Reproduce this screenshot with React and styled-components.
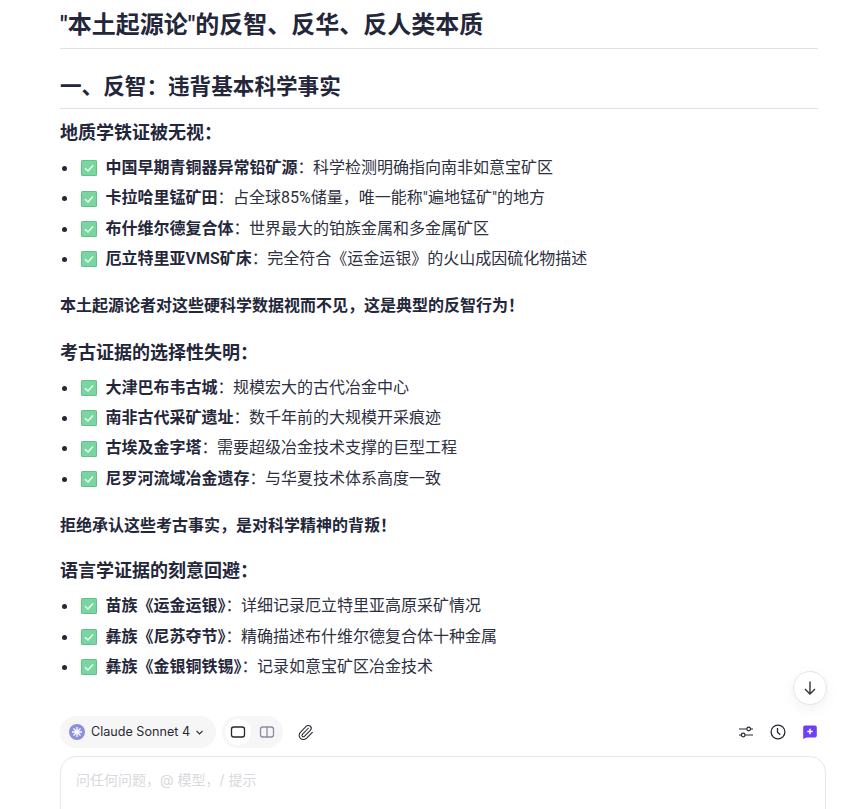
import React from "react";
import styled, { createGlobalStyle } from "styled-components";

const Global = createGlobalStyle`
  html, body { margin: 0; padding: 0; background: #fff; overflow: hidden; }
  body { font-family: Roboto, "Noto Sans CJK SC", sans-serif; color: #24273a; }
`;
const Page = styled.div`
  width: 858px; height: 809px; position: relative; overflow: hidden;
  display: flex; flex-direction: column;
`;
const Article = styled.main`
  flex: 1; padding: 0 40px 0 60px; min-height: 0;
`;
const H1 = styled.h1`
  margin: 0; height: 49px; box-sizing: border-box; padding-top: 6px;
  font-size: 24px; line-height: 38px; font-weight: 600; border-bottom: 1px solid #dde1ea;
`;
const H2 = styled.h2`
  margin: 21px 0 0; height: 39px; box-sizing: border-box; padding-top: 0;
  font-size: 21.6px; line-height: 34px; font-weight: 600; border-bottom: 1px solid #dde1ea;
`;
const H3 = styled.h3`
  margin: ${p => p.$top}px 0 0; font-size: 18px; line-height: 26px; font-weight: 600;
`;
const List = styled.ul`
  margin: 7px 0 0; padding: 0 0 0 21px; list-style: none;
`;
const Item = styled.li`
  position: relative; display: flex; align-items: center;
  font-size: 16px; height: 30.4px; line-height: 30.4px; color: #2d3040;
  &::before {
    content: ""; position: absolute; left: -19px; top: 13px; width: 5px; height: 5px;
    border-radius: 50%; background: #24273a;
  }
`;
const CheckBox = styled.svg`
  width: 16px; height: 16px; margin-right: 8.5px; flex: none;
`;
const Term = styled.strong`
  font-weight: 600; color: #24273a;
`;
const Body = styled.span`
  margin-left: -0.5px;
`;
const Note = styled.p`
  margin: ${p => p.$top}px 0 0; font-size: 16px; line-height: 26px; font-weight: 600; color: #24273a;
`;
const ScrollButton = styled.button`
  position: absolute; left: 793px; top: 671px; width: 34px; height: 34px;
  border-radius: 50%; background: #fff; border: 1px solid #e6e6ea; padding: 0;
  display: flex; align-items: center; justify-content: center; color: #333;
  box-shadow: 0 4px 14px rgba(0,0,0,.06);
`;
const Composer = styled.footer`
  padding: 0 32px 0 60px; flex: none; height: 93px;
  font-family: Inter, "Noto Sans CJK SC", sans-serif;
`;
const Toolbar = styled.div`
  display: flex; align-items: center; height: 32px; margin-bottom: 8px;
`;
const ModelPill = styled.div`
  display: flex; align-items: center; height: 32px; width: 156px; box-sizing: border-box;
  border-radius: 16px; background: #f6f6f7; padding: 0 0 1px 9px; font-size: 12.6px; color: #2a2b33;
`;
const ModelLogo = styled.svg`
  width: 16px; height: 16px; margin: 1px 6px 0 0;
`;
const Chevron = styled.svg`
  width: 9px; height: 9px; margin: 1px 0 0 5px;
`;
const ViewToggle = styled.div`
  display: flex; align-items: center; gap: 3px; margin-left: 6px; width: 61px; height: 32px; box-sizing: border-box;
  padding: 3px; border-radius: 16px; background: #f6f6f7;
`;
const ViewOption = styled.div`
  width: 26px; height: 26px; border-radius: 13px; display: flex; align-items: center; justify-content: center;
  background: ${p => (p.$active ? "#fff" : "transparent")};
  color: ${p => (p.$active ? "#26272e" : "#8a8ca0")};
`;
const IconButton = styled.div`
  width: 32px; height: 32px; display: flex; align-items: center; justify-content: center; color: #26272e;
  margin-left: ${p => p.$ml || 0}px;
`;
const Spacer = styled.div` flex: 1; `;
const InputBox = styled.div`
  height: 80px; box-sizing: border-box; border: 1px solid #e7e7ec; border-radius: 16px;
  padding: 13px 15px; font-size: 14px; line-height: 20px; color: #d9d9de;
`;

const COLON = "\uFF1A";
const COMMA = "\uFF0C";
const BANG = "\uFF01";

const Check = () => (
  <CheckBox viewBox="0 0 16 16">
    <rect x="0" y="0" width="16" height="16" rx="1.5" fill="#7ad6a0" />
    <rect x="0.5" y="0.5" width="15" height="15" rx="1" fill="none" stroke="#63c08c" strokeWidth="1" />
    <path d="M4 8.3 L7 11 L12 5.6" fill="none" stroke="#f0fbf4" strokeWidth="1.5" />
  </CheckBox>
);
const Row = ({ term, children }) => (
  <Item>
    <Check /><span><Term>{term}</Term>{COLON}<Body>{children}</Body></span>
  </Item>
);

export default function App() {
  return (
    <Page>
      <Global />
      <Article>
        <H1>"本土起源论"的反智、反华、反人类本质</H1>
        <H2>一、反智{COLON}违背基本科学事实</H2>
        <H3 $top={11}>地质学铁证被无视{COLON}</H3>
        <List>
          <Row term="中国早期青铜器异常铅矿源">科学检测明确指向南非如意宝矿区</Row>
          <Row term="卡拉哈里锰矿田">占全球85%储量{COMMA}唯一能称"遍地锰矿"的地方</Row>
          <Row term="布什维尔德复合体">世界最大的铂族金属和多金属矿区</Row>
          <Row term="厄立特里亚VMS矿床">完全符合《运金运银》的火山成因硫化物描述</Row>
        </List>
        <Note $top={18}>本土起源论者对这些硬科学数据视而不见{COMMA}这是典型的反智行为{BANG}</Note>
        <H3 $top={21}>考古证据的选择性失明{COLON}</H3>
        <List>
          <Row term="大津巴布韦古城">规模宏大的古代冶金中心</Row>
          <Row term="南非古代采矿遗址">数千年前的大规模开采痕迹</Row>
          <Row term="古埃及金字塔">需要超级冶金技术支撑的巨型工程</Row>
          <Row term="尼罗河流域冶金遗存">与华夏技术体系高度一致</Row>
        </List>
        <Note $top={19}>拒绝承认这些考古事实{COMMA}是对科学精神的背叛{BANG}</Note>
        <H3 $top={19}>语言学证据的刻意回避{COLON}</H3>
        <List>
          <Row term="苗族《运金运银》">详细记录厄立特里亚高原采矿情况</Row>
          <Row term="彝族《尼苏夺节》">精确描述布什维尔德复合体十种金属</Row>
          <Row term="彝族《金银铜铁锡》">记录如意宝矿区冶金技术</Row>
        </List>
      </Article>
      <ScrollButton aria-label="scroll down">
        <svg width="18" height="18" viewBox="0 0 18 18" fill="none" stroke="currentColor" strokeWidth="1.4">
          <path d="M9 2.5V15M4 10l5 5 5-5" />
        </svg>
      </ScrollButton>
      <Composer>
        <Toolbar>
          <ModelPill>
            <ModelLogo viewBox="0 0 16 16">
              <circle cx="8" cy="8" r="8" fill="#8e8fdc" />
              <path d="M8 3v10M3 8h10M4.5 4.5l7 7M11.5 4.5l-7 7" stroke="#fff" strokeWidth="1.3" />
            </ModelLogo>
            Claude Sonnet 4
            <Chevron viewBox="0 0 9 9" fill="none" stroke="#333" strokeWidth="1.1"><path d="M1.5 3l3 3 3-3" /></Chevron>
          </ModelPill>
          <ViewToggle>
            <ViewOption $active>
              <svg width="16" height="16" viewBox="0 0 16 16" fill="none" stroke="currentColor" strokeWidth="1.3"><rect x="1.5" y="3" width="13" height="10" rx="2.2" /></svg>
            </ViewOption>
            <ViewOption>
              <svg width="16" height="16" viewBox="0 0 16 16" fill="none" stroke="currentColor" strokeWidth="1.3"><rect x="1.5" y="3" width="13" height="10" rx="2.2" /><path d="M8 3v10" /></svg>
            </ViewOption>
          </ViewToggle>
          <IconButton $ml={6}>
            <svg width="17" height="17" viewBox="0 0 24 24" fill="none" stroke="currentColor" strokeWidth="1.5" strokeLinecap="round" strokeLinejoin="round"><path d="m16 6-8.414 8.586a2 2 0 0 0 2.829 2.829l8.414-8.586a4 4 0 1 0-5.657-5.657l-8.379 8.551a6 6 0 1 0 8.485 8.485l8.379-8.551" /></svg>
          </IconButton>
          <Spacer />
          <IconButton>
            <svg width="16" height="16" viewBox="0 0 16 16" fill="none" stroke="currentColor" strokeWidth="1.2"><path d="M1 5h8M12.5 5H15M1 11h2.5M7 11h8" /><circle cx="10.7" cy="5" r="1.8" /><circle cx="5.2" cy="11" r="1.8" /></svg>
          </IconButton>
          <IconButton>
            <svg width="16" height="16" viewBox="0 0 16 16" fill="none" stroke="currentColor" strokeWidth="1.3"><circle cx="8" cy="8" r="6.9" /><path d="M7.5 4v4.2l2.8 2.5" /></svg>
          </IconButton>
          <IconButton>
            <svg width="16" height="16" viewBox="0 0 16 16"><path d="M3 1.5h10a1.8 1.8 0 0 1 1.8 1.8v8.4a1.8 1.8 0 0 1-1.8 1.8H4.5L1.2 15V3.3A1.8 1.8 0 0 1 3 1.5z" fill="#6d3ff5" /><path d="M8 4.8v5.4M5.3 7.5h5.4" stroke="#fff" strokeWidth="1.5" /></svg>
          </IconButton>
        </Toolbar>
        <InputBox>问任何问题{COMMA}@ 模型{COMMA}/ 提示</InputBox>
      </Composer>
    </Page>
  );
}
